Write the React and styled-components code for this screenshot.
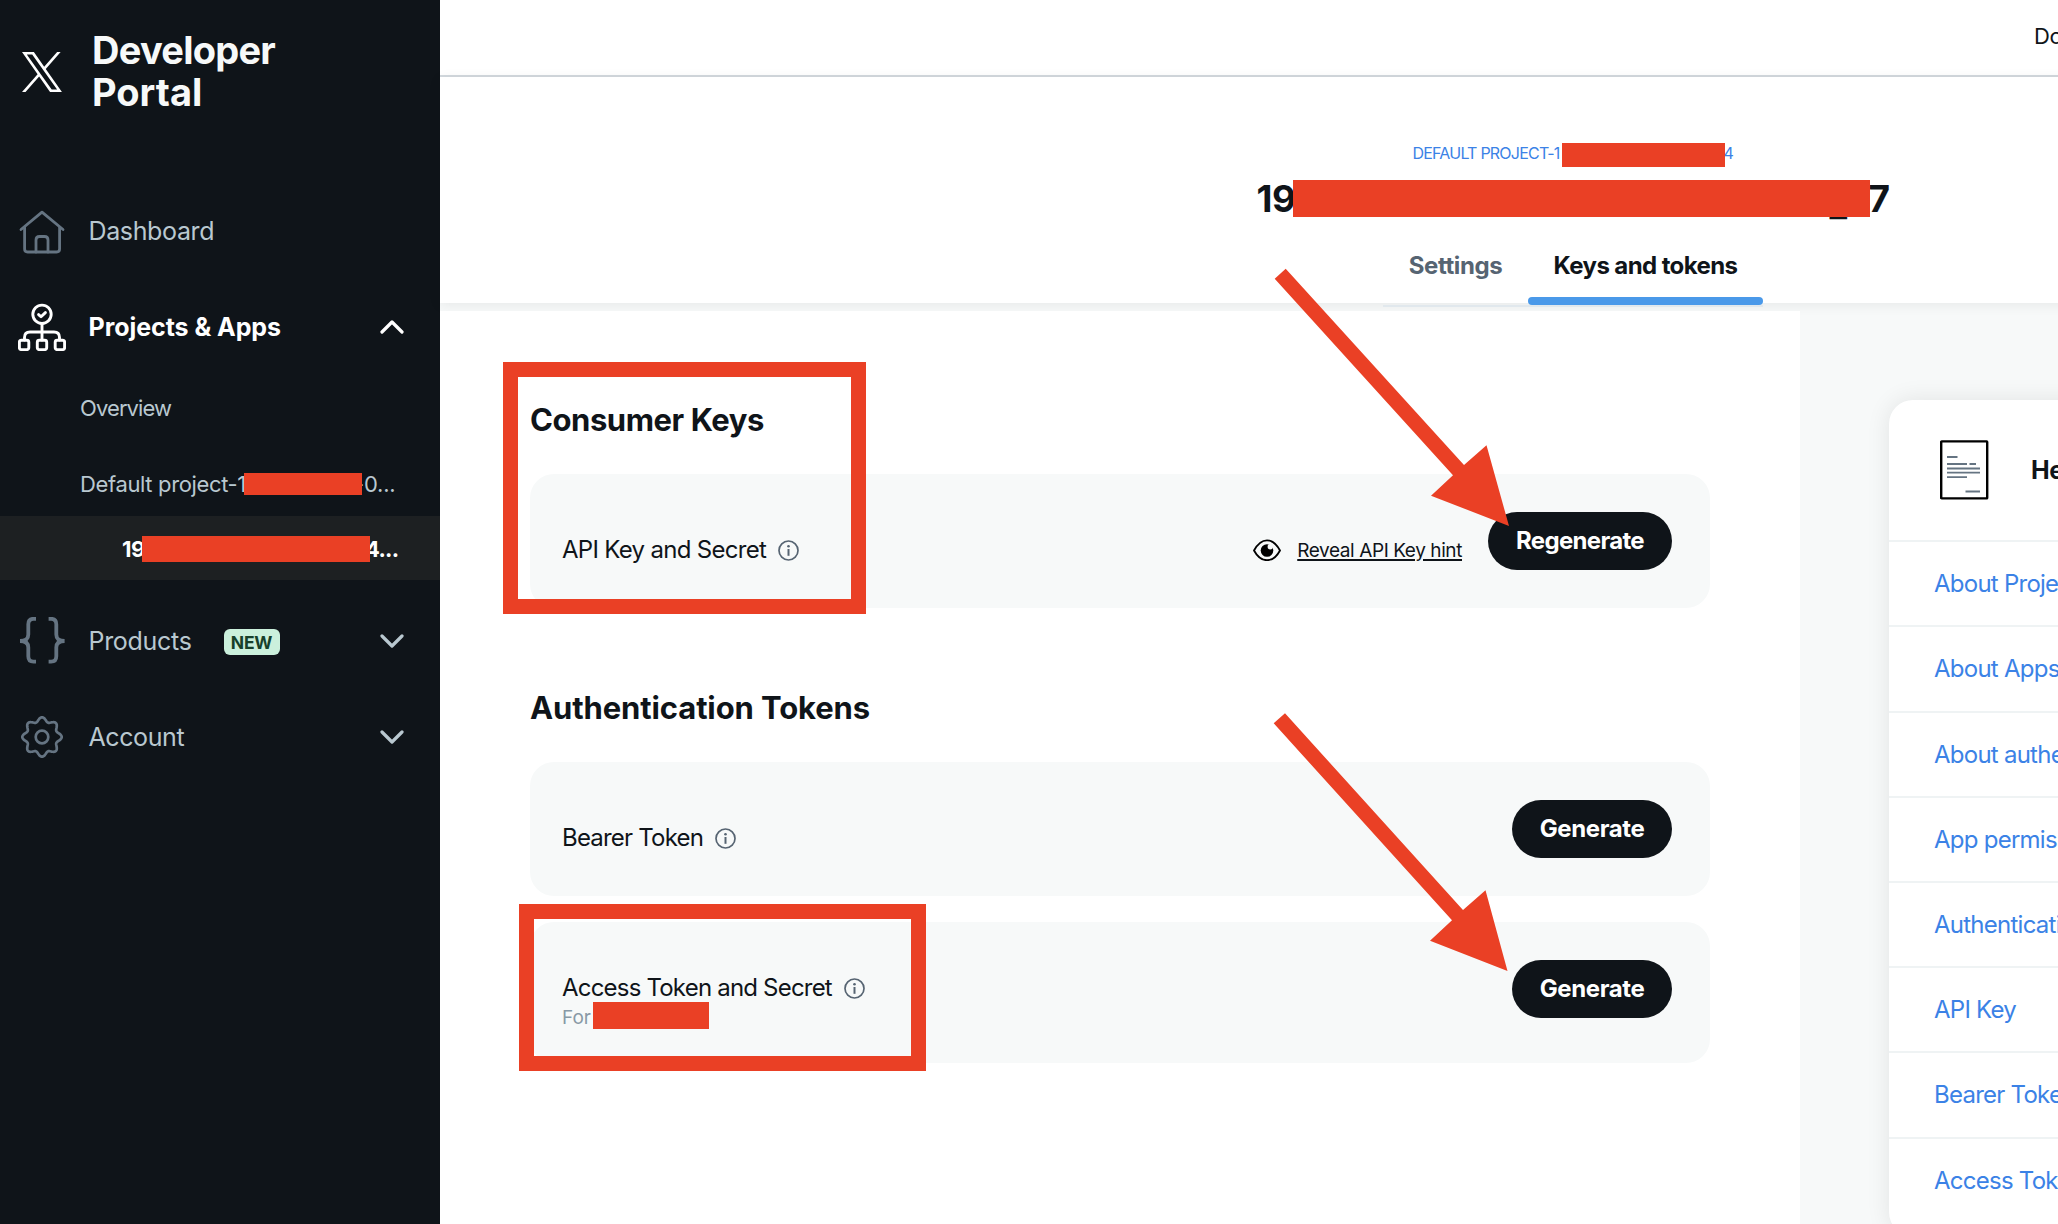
import React from 'react'
import { styled, createGlobalStyle } from 'styled-components'


const GlobalStyle = createGlobalStyle`
    * {
        box-sizing: border-box;
    }

    body {
        margin: 0;
        overflow: hidden;
        font-family: Inter, "Liberation Sans", sans-serif;
        color: #0f1419;
    }
`

const Page = styled.div`
    position: relative;
    display: flex;
    height: 100vh;
    overflow: hidden;
    background: #f7f9f9;
`

/* solid bar that hides the middle of an id */
const Redacted = styled.span`
    position: relative;
    flex: none;
    width: ${(p) => p.$width}px;
    height: ${(p) => p.$height}px;
    background: #ea4025;
`

const Piece = styled.span`
    flex: none;
    width: ${(p) => p.$width}px;
    margin-left: ${(p) => p.$overlap || 0}px;
    letter-spacing: ${(p) => p.$tracking || 0}px;
    white-space: nowrap;
`

const Underscore = styled(Piece)`
    padding-top: 3px;
`

/* sidebar */
const Sidebar = styled.aside`
    flex: none;
    width: 440px;
    background: #0f1419;
    color: #b9c8d0;
`
const Brand = styled.div`
    display: flex;
    align-items: center;
    gap: 30px;
    padding: 29px 0 0 22px;

    svg {
        margin-top: 2px;
    }
`
const BrandName = styled.h1`
    margin: 0;
    font-size: 38px;
    font-weight: 700;
    line-height: 42px;
    color: #f7f9f9;
`
const BrandLine = styled.span`
    display: block;
    letter-spacing: ${(p) => p.$tracking}px;
`
const Nav = styled.nav`
    margin-top: 70px;
`
const NavItem = styled.div`
    display: flex;
    align-items: center;
    height: 96px;
    padding: 0 36px 0 18px;
    font-size: 25px;
    font-weight: ${(p) => (p.$active ? 700 : 400)};
    color: ${(p) => (p.$active ? '#ffffff' : '#b9c8d0')};

    > svg:last-child:not(:first-child) {
        margin-left: auto;
    }
`
const NavLabel = styled.span`
    margin-left: 22.5px;
    letter-spacing: ${(p) => p.$tracking}px;
`
const NewBadge = styled.span`
    width: 56px;
    height: 26px;
    margin: 2px 0 0 32px;
    border-radius: 6px;
    background: #cbf0dc;
    color: #17402a;
    font-size: 17.5px;
    font-weight: 700;
    line-height: 27px;
    letter-spacing: -0.2px;
    text-align: center;
`
const SubMenu = styled.div`
    margin-bottom: 13px;
    font-size: 22px;
`
const SubItem = styled.div`
    display: flex;
    align-items: center;
    height: 66px;
    padding-left: 80px;
    letter-spacing: -0.9px;
`
const ProjectItem = styled(SubItem)`
    height: 75px;
    padding-top: 11px;
`
const AppItem = styled(SubItem)`
    height: 64px;
    padding: 1px 0 0 122px;
    background: #1d2022;
    color: #ffffff;
    font-weight: 700;
`

/* main column, wider than the window so the page is cut at the right */
const Main = styled.main`
    flex: none;
    display: flex;
    flex-direction: column;
    width: 2266px;
`
const TopBar = styled.div`
    flex: none;
    height: 77px;
    padding: 0 0 4px 1594px;
    border-bottom: 2px solid #d3d9de;
    background: #ffffff;
    font-size: 22px;
    line-height: 72px;
    letter-spacing: -0.5px;
`
const Header = styled.header`
    position: relative;
    flex: none;
    display: flex;
    flex-direction: column;
    align-items: center;
    height: 226px;
    padding-top: 66px;
    background: #ffffff;
    box-shadow: 0 2px 12px rgba(0, 0, 0, 0.07);
`
const ProjectLink = styled.div`
    display: flex;
    height: 24px;
    font-size: 16px;
    line-height: 20px;
    color: #3b82e6;
`
const AppTitle = styled.h2`
    display: flex;
    height: 37px;
    margin: 13px 0 16px;
    font-size: 37px;
    font-weight: 700;
    line-height: 37px;
`
const Tabs = styled.div`
    flex: none;
    display: flex;
    height: 74px;
    border-bottom: 2px solid #e1e8ed;
`
const Tab = styled.div`
    width: ${(p) => p.$width}px;
    font-size: 24px;
    font-weight: 700;
    letter-spacing: ${(p) => p.$tracking}px;
    text-align: center;
    line-height: 62px;
    padding-top: 2px;
    color: ${(p) => (p.$active ? '#0f1419' : '#566472')};

    &::after {
        content: "";
        display: block;
        height: 8px;
        border-radius: 4px;
        background: ${(p) => (p.$active ? '#4a99e9' : 'transparent')};
    }
`
const Body = styled.div`
    position: relative;
    flex: 1;
    display: flex;
    align-items: stretch;
    margin-top: 8px;
`
const Panel = styled.section`
    flex: none;
    width: 1360px;
    padding: 88px 90px 0;
    background: #ffffff;
`
const SectionTitle = styled.h3`
    margin: 0 0 34px;
    font-size: 31px;
    font-weight: 700;
    line-height: 41px;
    letter-spacing: ${(p) => p.$tracking}px;

    * + & {
        margin-top: 79px;
    }
`
const KeyCard = styled.div`
    display: flex;
    align-items: flex-start;
    height: ${(p) => p.$height || 134}px;
    padding: 38px 38px 0 32px;
    border-radius: 24px;
    background: #f7f9f9;

    & + & {
        margin-top: 26px;
    }
`
const KeyInfo = styled.div`
    flex: 1;
    padding-top: ${(p) => (p.$owner ? 13 : 23)}px;
`
const KeyName = styled.div`
    display: flex;
    align-items: center;
    gap: 12px;
    height: 30px;
    font-size: 24px;
    line-height: 32px;
    letter-spacing: ${(p) => p.$tracking}px;
    white-space: nowrap;
`
const Owner = styled.div`
    display: flex;
    height: 27px;
    margin-top: -1px;
    font-size: 19px;
    line-height: 31px;
    color: #8899a6;
`
const RevealHint = styled.a`
    display: flex;
    align-items: center;
    gap: 16px;
    height: 30px;
    margin: 23px 26px 0 0;
    font-size: 19px;
    letter-spacing: -0.41px;
    text-decoration: underline;
    text-decoration-thickness: 1.5px;
    text-underline-offset: 2px;
    white-space: nowrap;
`
const PillButton = styled.button`
    width: ${(p) => p.$width}px;
    height: 58px;
    padding: 0 0 2px;
    border: none;
    border-radius: 29px;
    background: #0f1419;
    color: #ffffff;
    font-family: inherit;
    font-size: 24px;
    font-weight: 700;
    letter-spacing: ${(p) => p.$tracking}px;
`

/* help column */
const HelpColumn = styled.aside`
    flex: 1;
    padding: 89px 60px 0 89px;
`
const HelpCard = styled.div`
    padding-bottom: 14px;
    border-radius: 24px;
    background: #ffffff;
    box-shadow: 0 0 24px rgba(0, 0, 0, 0.09);
`
const HelpTitle = styled.div`
    display: flex;
    align-items: center;
    gap: 42px;
    height: 140.3px;
    padding-left: 50px;
    font-size: 25px;
    font-weight: 700;
    letter-spacing: -0.4px;
`
const HelpLink = styled.a`
    display: block;
    height: 85.2px;
    padding-left: 45px;
    border-top: 2px solid #eff3f4;
    font-size: 24px;
    line-height: 83px;
    letter-spacing: -0.75px;
    color: #3b82e6;
`

/* markers drawn on top of the page */
const Highlight = styled.div`
    position: absolute;
    left: ${(p) => p.$x}px;
    top: ${(p) => p.$y}px;
    width: ${(p) => p.$width}px;
    height: ${(p) => p.$height}px;
    border: 15px solid #ea4025;
`
const Arrows = styled.svg`
    position: absolute;
    left: 0;
    top: 0;
    pointer-events: none;
`


const XLogo = () => (
    <svg width="40" height="40" viewBox="0 0 24 24" fill="#fff">
        <path d="M14.258 10.152L23.176 0h-2.113l-7.747 8.813L7.133 0H0l9.352 13.328L0 23.973h2.113l8.176-9.309 6.531 9.309h7.133zm-2.895 3.293l-.949-1.328L2.875 1.56h3.246l6.086 8.523.945 1.328 7.91 11.078h-3.246zm0 0" />
    </svg>
)

const HomeIcon = () => (
    <svg width="48" height="48" fill="none" stroke="#657482" strokeWidth="2.8" strokeLinecap="round" strokeLinejoin="round">
        <path d="M3 22.5L24 5.2L45 22.5" />
        <path d="M6.6 20.5V42q0 3 3 3h29q3 0 3-3V20.5" />
        <path d="M18 45V33q0-3.5 3.5-3.5h5q3.5 0 3.5 3.5v12" />
    </svg>
)

const ProjectsIcon = () => (
    <svg width="48" height="48" fill="none" stroke="#fff" strokeWidth="2.9" strokeLinecap="round" strokeLinejoin="round">
        <circle cx="24" cy="11.3" r="9.2" />
        <path d="M20.6 11.6l2.4 2.2 4.4-4.2" />
        <path d="M24 20.8V37M6.5 37v-2.5q0-5.5 5.5-5.5h24q5.5 0 5.5 5.5V37" />
        <rect x="1.4" y="37.2" width="9.4" height="9.4" rx="2" />
        <rect x="19.3" y="37.2" width="9.4" height="9.4" rx="2" />
        <rect x="37.2" y="37.2" width="9.4" height="9.4" rx="2" />
    </svg>
)

const BracesIcon = () => (
    <svg width="48" height="48" fill="none" stroke="#657482" strokeWidth="3.8">
        <path d="M18 1.8h-2.5q-5.2 0-5.2 5.4v10.3q0 6.5-8.3 6.5q8.3 0 8.3 6.5v8.8q0 5.4 5.2 5.4H18" />
        <path d="M30.6 1.8h2.5q5.2 0 5.2 5.4v10.3q0 6.5 8.3 6.5q-8.3 0-8.3 6.5v8.8q0 5.4-5.2 5.4h-2.5" />
    </svg>
)

const gearPoints = Array.from({ length: 160 }, (_, i) => {
    const a = (i / 160) * Math.PI * 2
    const r = 17.6 + 2.1 * Math.cos(8 * a)
    return `${(24 + r * Math.cos(a)).toFixed(2)},${(24 + r * Math.sin(a)).toFixed(2)}`
}).join(' ')

const GearIcon = () => (
    <svg width="48" height="48" fill="none" stroke="#657482" strokeWidth="2.7">
        <polygon points={gearPoints} strokeLinejoin="round" />
        <circle cx="24" cy="24" r="6.3" />
    </svg>
)

const Chevron = ({ up }) => (
    <svg width="24" height="16" fill="none" stroke={up ? '#fff' : '#b9c8d0'} strokeWidth="3.2" strokeLinecap="round" strokeLinejoin="round">
        <path d={up ? 'M2 13L12 3L22 13' : 'M2 3L12 13L22 3'} />
    </svg>
)

const InfoIcon = () => (
    <svg width="21" height="21" fill="none" stroke="#566472">
        <circle cx="10.5" cy="10.5" r="9.5" strokeWidth="1.7" />
        <path d="M10.5 9v6.8" strokeWidth="2" />
        <circle cx="10.5" cy="6.2" r="1.3" fill="#566472" stroke="none" />
    </svg>
)

const EyeIcon = () => (
    <svg width="28" height="22" fill="none">
        <path d="M1 11.5C4.5 5 9 1.3 14 1.3S23.5 5 27 11.5C23.5 18 19 21.2 14 21.2S4.500 18 1 11.5z" stroke="#000" strokeWidth="1.8" />
        <circle cx="14" cy="11.5" r="6.3" fill="#000" />
        <circle cx="17.3" cy="7.8" r="2.7" fill="#f7f9f9" />
    </svg>
)

const DocIcon = () => (
    <svg width="50" height="60" fill="none" stroke="#657482" strokeWidth="1.8">
        <rect x="2.2" y="1.4" width="46" height="57" rx="0.5" stroke="#000" strokeWidth="2.4" />
        <path d="M8 17h10.5M8 24h20M30.5 24H37M8 28.5h33M8 32.7h33M8 37.2h20M26.5 51.5H41" />
    </svg>
)

const helpLinks = [
    'About Projects',
    'About Apps',
    'About authentication',
    'App permissions',
    'Authentication best practices',
    'API Key',
    'Bearer Token',
    'Access Token and Secret'
]


function App() {
    return (
        <Page>
            <GlobalStyle />

            <Sidebar>
                <Brand>
                    <XLogo />
                    <BrandName>
                        <BrandLine $tracking={-0.75}>Developer</BrandLine>
                        <BrandLine $tracking={0}>Portal</BrandLine>
                    </BrandName>
                </Brand>

                <Nav>
                    <NavItem>
                        <HomeIcon />
                        <NavLabel $tracking={-0.36}>Dashboard</NavLabel>
                    </NavItem>
                    <NavItem $active>
                        <ProjectsIcon />
                        <NavLabel $tracking={-0.05}>Projects &amp; Apps</NavLabel>
                        <Chevron up />
                    </NavItem>
                    <SubMenu>
                        <SubItem>Overview</SubItem>
                        <ProjectItem>
                            <Piece $width={164} $tracking={-0.36}>Default project-1</Piece>
                            <Redacted $width={118} $height={22} />
                            <Piece $overlap={-8} $tracking={-0.2}>-0...</Piece>
                        </ProjectItem>
                        <AppItem>
                            <Piece $width={20} $tracking={-0.4}>19</Piece>
                            <Redacted $width={228} $height={26} />
                            <Piece $overlap={-5} $tracking={-0.7}>4...</Piece>
                        </AppItem>
                    </SubMenu>
                    <NavItem>
                        <BracesIcon />
                        <NavLabel $tracking={-0.3}>Products</NavLabel>
                        <NewBadge>NEW</NewBadge>
                        <Chevron />
                    </NavItem>
                    <NavItem>
                        <GearIcon />
                        <NavLabel $tracking={-0.4}>Account</NavLabel>
                        <Chevron />
                    </NavItem>
                </Nav>
            </Sidebar>

            <Main>
                <TopBar>Docs</TopBar>
                <Header>
                    <ProjectLink>
                        <Piece $width={149} $tracking={-0.78}>DEFAULT PROJECT-1</Piece>
                        <Redacted $width={163} $height={24} />
                        <Piece $width={10} $overlap={-1}>4</Piece>
                    </ProjectLink>
                    <AppTitle>
                        <Piece $width={36} $tracking={-0.5}>19</Piece>
                        <Redacted $width={577} $height={37} />
                        <Underscore $width={39} $overlap={-40}>_</Underscore>
                        <Piece $width={21}>7</Piece>
                    </AppTitle>
                    <Tabs>
                        <Tab $width={145} $tracking={-0.39}>Settings</Tab>
                        <Tab $width={235} $tracking={-0.6} $active>Keys and tokens</Tab>
                    </Tabs>
                </Header>

                <Body>
                    <Panel>
                        <SectionTitle $tracking={-0.44}>Consumer Keys</SectionTitle>
                        <KeyCard>
                            <KeyInfo>
                                <KeyName $tracking={-0.7}>API Key and Secret <InfoIcon /></KeyName>
                            </KeyInfo>
                            <RevealHint>
                                <EyeIcon />
                                Reveal API Key hint
                            </RevealHint>
                            <PillButton $width={184} $tracking={-0.67}>Regenerate</PillButton>
                        </KeyCard>

                        <SectionTitle $tracking={-0.11}>Authentication Tokens</SectionTitle>
                        <KeyCard>
                            <KeyInfo>
                                <KeyName $tracking={-0.8}>Bearer Token <InfoIcon /></KeyName>
                            </KeyInfo>
                            <PillButton $width={160} $tracking={-0.4}>Generate</PillButton>
                        </KeyCard>
                        <KeyCard $height={141}>
                            <KeyInfo $owner>
                                <KeyName $tracking={-0.8}>Access Token and Secret <InfoIcon /></KeyName>
                                <Owner>
                                    <Piece $width={31}>For</Piece>
                                    <Redacted $width={116} $height={27} />
                                </Owner>
                            </KeyInfo>
                            <PillButton $width={160} $tracking={-0.4}>Generate</PillButton>
                        </KeyCard>
                    </Panel>

                    <HelpColumn>
                        <HelpCard>
                            <HelpTitle>
                                <DocIcon />
                                Helpful docs
                            </HelpTitle>
                            {helpLinks.map((link) => (
                                <HelpLink key={link}>{link}</HelpLink>
                            ))}
                        </HelpCard>
                    </HelpColumn>
                </Body>
            </Main>

            <Highlight $x={503} $y={362} $width={363} $height={252} />
            <Highlight $x={519} $y={904} $width={407} $height={167} />
            <Arrows width="2058" height="1224" fill="#ea4025">
                <polygon points="1274.7,278.7 1285.7,268.7 1464,465 1486.5,445.3 1509,526 1431,495.7 1453,475.3" />
                <polygon points="1273.7,723.3 1285,713.3 1463,910 1485.5,890.3 1507.5,971 1430,940.7 1452,920.3" />
            </Arrows>
        </Page>
    )
}

export default App
